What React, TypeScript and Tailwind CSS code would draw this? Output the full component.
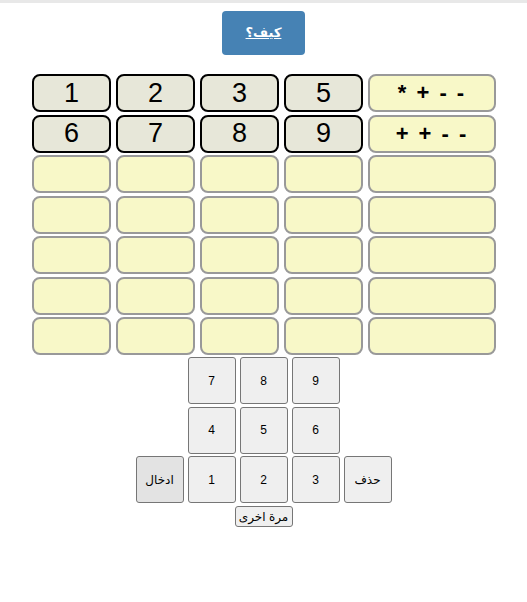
import React from "react";

const digitsTop = [
  ["1", "2", "3", "5"],
  ["6", "7", "8", "9"],
];
const ops = ["* + - -", "+ + - -"];

export default function App() {
  const font = { fontFamily: '"Liberation Sans", "DejaVu Sans", Arial, sans-serif' };

  return (
    <div className="min-h-[602px] w-full bg-white" style={font}>
      <div className="h-[3px] w-full bg-[#e8e8e8]" />

      <div className="mt-[8px] flex justify-center">
        <button className="flex h-[44px] w-[83px] items-center justify-center rounded-[4px] bg-[#4682b4] text-[13px] font-bold text-white underline">
          كيف؟
        </button>
      </div>

      {/* board */}
      <div className="ml-[32px] mt-[19px] grid grid-cols-[79px_79px_79px_79px_128px] gap-x-[5px] gap-y-[2.5px]">
        {digitsTop.map((row, r) => (
          <React.Fragment key={r}>
            {row.map((d) => (
              <div
                key={d}
                className="flex h-[38px] items-center justify-center rounded-[8px] border-2 border-black bg-[#e7e7d9] text-[27px] leading-none text-black"
              >
                {d}
              </div>
            ))}
            <div className="flex h-[38px] items-center justify-center whitespace-pre rounded-[8px] border-2 border-[#999999] bg-[#f8f8c8] text-[22px] font-bold leading-none tracking-[2px] text-black">
              {ops[r]}
            </div>
          </React.Fragment>
        ))}
        {Array.from({ length: 25 }).map((_, i) => (
          <div
            key={i}
            className="h-[38px] rounded-[8px] border-2 border-[#999999] bg-[#f8f8c8]"
          />
        ))}
      </div>

      {/* keypad */}
      <div className="mx-auto mt-[2px] grid w-[256px] grid-cols-[48px_48px_48px_48px_48px] gap-x-[4px] gap-y-[2.5px] text-[12px] text-black">
        <div />
        {["7", "8", "9"].map((k) => (
          <button key={k} className="h-[47px] rounded-[3px] border border-[#767676] bg-[#efefef]">
            {k}
          </button>
        ))}
        <div />
        <div />
        {["4", "5", "6"].map((k) => (
          <button key={k} className="h-[47px] rounded-[3px] border border-[#767676] bg-[#efefef]">
            {k}
          </button>
        ))}
        <div />
        <button className="h-[47px] rounded-[3px] border border-[#767676] bg-[#e3e3e3]">ادخال</button>
        {["1", "2", "3"].map((k) => (
          <button key={k} className="h-[47px] rounded-[3px] border border-[#767676] bg-[#efefef]">
            {k}
          </button>
        ))}
        <button className="h-[47px] rounded-[3px] border border-[#767676] bg-[#efefef]">حذف</button>
      </div>

      <div className="mt-[3px] flex justify-center">
        <button className="h-[21px] w-[58px] rounded-[3px] border border-[#767676] bg-[#efefef] text-[12px] text-black">
          مرة اخرى
        </button>
      </div>
    </div>
  );
}
